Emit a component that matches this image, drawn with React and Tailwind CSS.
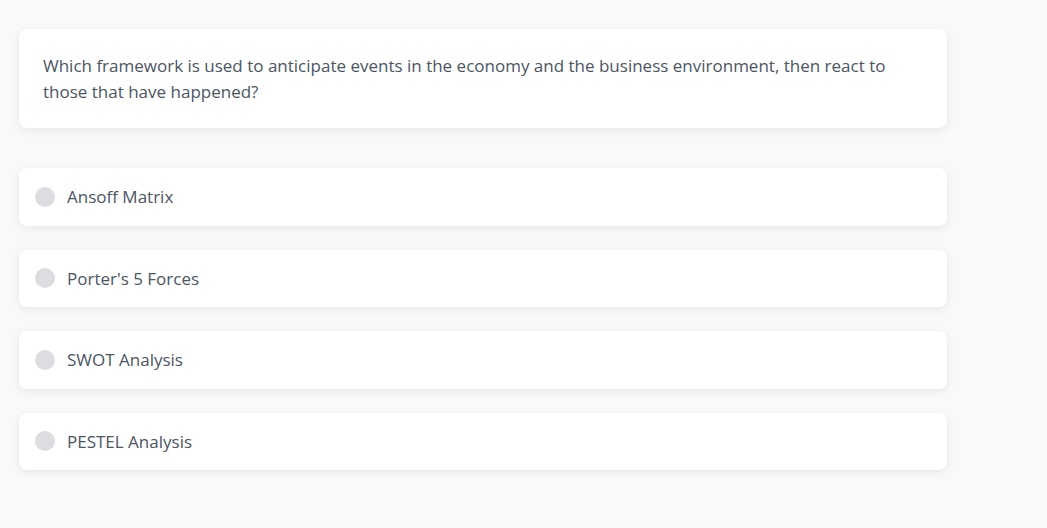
export default function App() {
  const options = ["Ansoff Matrix", "Porter's 5 Forces", "SWOT Analysis", "PESTEL Analysis"];
  return (
    <div className="min-h-[528px] w-full bg-[#f8f9fa] pt-[29px] pl-[19px]" style={{ fontFamily: '"Open Sans", "Noto Sans", sans-serif' }}>
      <div className="w-[928px] flex flex-col">
        <div className="bg-white rounded-lg shadow-[0_2px_8px_rgba(0,0,0,0.08)] p-6 text-[17px] leading-[25.5px] text-[#4b5563]">
          Which framework is used to anticipate events in the economy and the business environment, then react to those that have happened?
        </div>
        <div className="mt-10 flex flex-col gap-6">
          {options.map((o) => (
            <div key={o} className="bg-white rounded-lg shadow-[0_2px_8px_rgba(0,0,0,0.08)] px-4 py-4 flex items-center gap-3">
              <div className="w-5 h-5 rounded-full bg-[#dcdde0]" />
              <span className="text-[17px] leading-[25.5px] text-[#4b5563]">{o}</span>
            </div>
          ))}
        </div>
      </div>
    </div>
  );
}
